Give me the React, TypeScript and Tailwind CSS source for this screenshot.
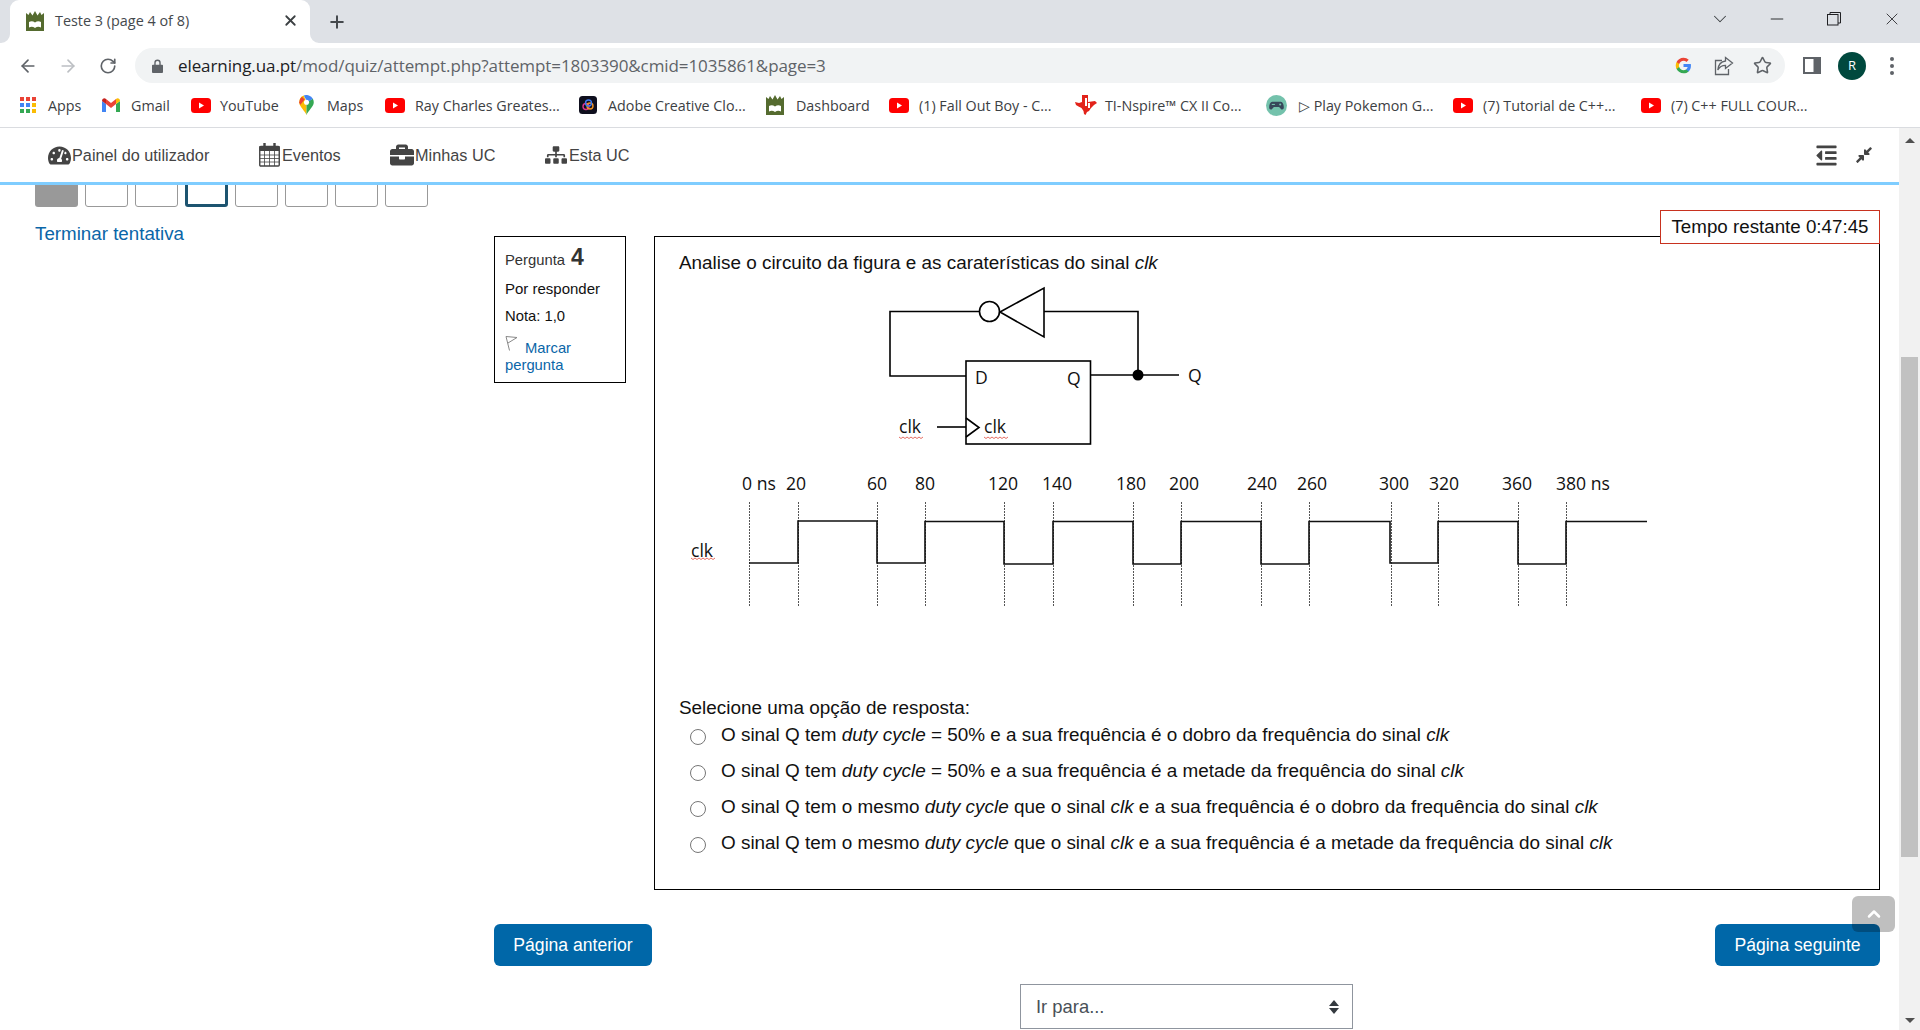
import React from "react";
import { ArrowLeft, ArrowRight, RotateCw, Star, X, Plus, ChevronDown, Minus, ChevronUp } from "lucide-react";
import { FaTachometerAlt, FaBriefcase, FaSitemap, FaOutdent, FaCompressAlt } from "react-icons/fa";

const chromeFont = "font-['Open_Sans','Noto_Sans',sans-serif]";

function Castle({ className }: { className?: string }) {
  return (
    <svg viewBox="0 0 20 20" className={className}>
      <path d="M1 2l2.500 2L5 1l2.500 3.500L10 0l2.500 4.500L15 1l1.500 3L19 2v18H1z" fill="#556b2f" />
      <path d="M4 11c2-1 4-1 6 .6 2-1.600 4-1.600 6-.6v5.500c-2-1-4-1-6 .5-2-1.500-4-1.500-6-.5z" fill="#fff" />
    </svg>
  );
}

function YT() {
  return (
    <svg viewBox="0 0 20 15" className="w-[20px] h-[15px]">
      <rect width="20" height="15" rx="3.500" fill="#f00" />
      <path d="M8 4.500v6l5-3z" fill="#fff" />
    </svg>
  );
}

function AppsIcon() {
  const c = ["#ea4335", "#ea4335", "#ea4335", "#4285f4", "#4285f4", "#fbbc04", "#34a853", "#34a853", "#fbbc04"];
  return (
    <div className="grid grid-cols-3 gap-[2px] w-[16px] h-[16px]">
      {c.map((col, i) => (
        <span key={i} className="block w-[4px] h-[4px]" style={{ background: col }} />
      ))}
    </div>
  );
}

function GmailIcon() {
  return (
    <svg viewBox="0 0 18 14" className="w-[18px] h-[14px]">
      <path d="M0 3v11h4V6z" fill="#4285f4" />
      <path d="M18 3v11h-4V6z" fill="#34a853" />
      <path d="M4 6l5 4 5-4V1L9 5 4 1z" fill="#ea4335" />
      <path d="M0 3c0-2.500 2.500-3.500 4-2v5z" fill="#c5221f" />
      <path d="M18 3c0-2.500-2.500-3.500-4-2v5z" fill="#fbbc04" />
    </svg>
  );
}

function MapsIcon() {
  return (
    <svg viewBox="0 0 16 22" className="w-[15px] h-[20px]">
      <path d="M8 22C6 17 0 13 0 8a8 8 0 0 1 5-7.400L8 8z" fill="#fbbc04" />
      <path d="M8 22c2-5 8-9 8-14 0-1.500-.4-2.800-1-4L8 8z" fill="#34a853" />
      <path d="M5 .6A8 8 0 0 1 15 4l-4 3-3-1z" fill="#4285f4" />
      <path d="M0 8a8 8 0 0 1 3-6l3 3-5 6z" fill="#ea4335" />
      <circle cx="8" cy="8" r="2.800" fill="#fff" />
    </svg>
  );
}

function AdobeIcon() {
  return (
    <svg viewBox="0 0 18 18" className="w-[18px] h-[18px]">
      <rect width="18" height="18" rx="3.500" fill="#0f0f1e" />
      <circle cx="7" cy="10.500" r="3" fill="none" stroke="#e0338f" strokeWidth="1.400" />
      <circle cx="11" cy="10" r="3" fill="none" stroke="#f29423" strokeWidth="1.400" />
      <circle cx="9.500" cy="7" r="3" fill="none" stroke="#3f7bf0" strokeWidth="1.400" />
    </svg>
  );
}

function TiIcon() {
  return (
    <svg viewBox="0 0 22 22" className="w-[22px] h-[22px]">
      <path d="M7 1h6v7l7-1 2 2-3 2-3 3-2 3-2 1-1.500 3-1.500-1-.5-3-2-3-3-1.500L1 11 0 8l4 1 3-1z" fill="#e2231a" />
      <path d="M10 4h2v8h-2zM14 5h2v2h-2zM13 9h2v5h-2z" fill="#fff" />
    </svg>
  );
}

function GameIcon() {
  return (
    <svg viewBox="0 0 20 20" className="w-[21px] h-[21px]">
      <circle cx="10" cy="10" r="10" fill="#74c2ac" />
      <path d="M6 6.500h8c2 0 3 3 3 5.500 0 2-2 2.500-3 1l-1.500-1.500h-5L6 13c-1 1.500-3 1-3-1 0-2.500 1-5.500 3-5.500z" fill="#37475a" />
      <circle cx="13.500" cy="9" r="1" fill="#74c2ac" />
      <rect x="5.500" y="8.500" width="3" height="1" fill="#74c2ac" />
    </svg>
  );
}

function Bookmark({ icon, label, iconSlot, textWidth }: { icon: React.ReactNode; label: string; iconSlot: string; textWidth: string }) {
  return (
    <div className="flex items-center shrink-0">
      <div className={`flex items-center justify-start shrink-0 ${iconSlot}`}>{icon}</div>
      <span className={`whitespace-nowrap text-[14.300px] text-[#3c4043] pt-[1px] ${textWidth}`}>{label}</span>
    </div>
  );
}

function BookmarksBar() {
  return (
    <div className={`h-[45px] border-b border-[#dadce0] bg-white flex items-center pl-[20px] gap-[21px] shrink-0 overflow-hidden ${chromeFont}`}>
      <Bookmark icon={<AppsIcon />} label="Apps" iconSlot="w-[28px]" textWidth="w-[33px]" />
      <Bookmark icon={<GmailIcon />} label="Gmail" iconSlot="w-[29px]" textWidth="w-[39px]" />
      <Bookmark icon={<YT />} label="YouTube" iconSlot="w-[29px]" textWidth="w-[58px]" />
      <Bookmark icon={<MapsIcon />} label="Maps" iconSlot="w-[28px]" textWidth="w-[37px]" />
      <Bookmark icon={<YT />} label="Ray Charles Greates..." iconSlot="w-[30px]" textWidth="w-[143px]" />
      <Bookmark icon={<AdobeIcon />} label="Adobe Creative Clo..." iconSlot="w-[29px]" textWidth="w-[136px]" />
      <Bookmark icon={<Castle className="w-[20px] h-[20px]" />} label="Dashboard" iconSlot="w-[31px]" textWidth="w-[72px]" />
      <Bookmark icon={<YT />} label="(1) Fall Out Boy - C..." iconSlot="w-[30px]" textWidth="w-[135px]" />
      <Bookmark icon={<TiIcon />} label="TI-Nspire™ CX II Co..." iconSlot="w-[30px]" textWidth="w-[140px]" />
      <Bookmark icon={<GameIcon />} label="▷ Play Pokemon G..." iconSlot="w-[33px]" textWidth="w-[133px]" />
      <Bookmark icon={<YT />} label="(7) Tutorial de C++..." iconSlot="w-[30px]" textWidth="w-[137px]" />
      <Bookmark icon={<YT />} label="(7) C++ FULL COUR..." iconSlot="w-[30px]" textWidth="w-[142px]" />
    </div>
  );
}

function TabStrip() {
  return (
    <div className={`h-[43px] bg-[#dee1e6] flex shrink-0 pl-[10px] ${chromeFont}`}>
      <div className="relative w-[300px] h-[43px] bg-white rounded-t-[9px] flex items-center pl-[15px] pr-[11px] pb-[2px]">
        <svg viewBox="0 0 9 9" className="absolute -left-[9px] bottom-0 w-[9px] h-[9px]"><path d="M9 0v9H0a9 9 0 0 0 9-9z" fill="#fff" /></svg>
        <svg viewBox="0 0 9 9" className="absolute -right-[9px] bottom-0 w-[9px] h-[9px]"><path d="M0 0v9h9a9 9 0 0 1-9-9z" fill="#fff" /></svg>
        <Castle className="w-[20px] h-[20px] shrink-0" />
        <span className="ml-[10px] text-[14.400px] text-[#45494d] whitespace-nowrap flex-1">Teste 3 (page 4 of 8)</span>
        <X size={17} strokeWidth={2.500} className="text-[#3c4043]" />
      </div>
      <div className="ml-[17px] h-[43px] flex items-center">
        <Plus size={20} strokeWidth={2.400} className="text-[#45494d]" />
      </div>
      <div className="ml-auto flex items-center h-[37px] pr-[18px]">
        <ChevronDown size={22} strokeWidth={1.100} className="text-[#3c4043] mr-[36px]" />
        <Minus size={20} strokeWidth={1.100} className="text-[#202124] mr-[40px]" />
        <svg viewBox="0 0 14 14" className="w-[14px] h-[14px] mr-[41px]" fill="none" stroke="#202124" strokeWidth="1">
          <rect x="0.500" y="2.500" width="10.500" height="10.500" fill="#dee1e6" />
          <path d="M3 2.500V.5h10.500V11h-2.500" />
        </svg>
        <X size={20} strokeWidth={1} className="text-[#202124]" />
      </div>
    </div>
  );
}

function Toolbar() {
  return (
    <div className={`h-[40px] bg-white flex items-start shrink-0 pt-[5px] pl-[8px] ${chromeFont}`}>
      <div className="w-[40px] h-[35px] flex items-center justify-center"><ArrowLeft size={20} strokeWidth={2} className="text-[#5f6368]" /></div>
      <div className="w-[40px] h-[35px] flex items-center justify-center"><ArrowRight size={20} strokeWidth={2} className="text-[#bcbfc3]" /></div>
      <div className="w-[40px] h-[35px] flex items-center justify-center"><RotateCw size={18} strokeWidth={2.200} className="text-[#5f6368]" /></div>
      <div className="ml-[7px] w-[1650px] h-[35px] rounded-full bg-[#f1f3f4] flex items-center pl-[17px] pr-[13px]">
        <svg viewBox="0 0 12 15" className="w-[11px] h-[14px] shrink-0">
          <path d="M2.500 6V4a3.500 3.500 0 0 1 7 0v2H11a1 1 0 0 1 1 1v7a1 1 0 0 1-1 1H1a1 1 0 0 1-1-1V7a1 1 0 0 1 1-1zM4 6h4V4a2 2 0 0 0-4 0z" fill="#5f6368" />
        </svg>
        <span className="ml-[15px] text-[17px] whitespace-nowrap text-[#5f6368] tracking-[-0.09px]">
          <span className="text-[#202124]">elearning.ua.pt</span>/mod/quiz/attempt.php?attempt=1803390&amp;cmid=1035861&amp;page=3
        </span>
        <div className="ml-auto flex items-center">
          <svg viewBox="0 0 48 48" className="w-[17px] h-[17px] mr-[22px]">
            <path fill="#4285f4" d="M45 24.500c0-1.600-.1-3.100-.4-4.500H24v8.500h11.800c-.5 2.700-2 5-4.400 6.600v5.500h7.100C42.700 36.700 45 31.100 45 24.500z" />
            <path fill="#34a853" d="M24 46c5.900 0 10.900-2 14.500-5.300l-7.100-5.500c-2 1.300-4.500 2.100-7.400 2.100-5.700 0-10.500-3.800-12.200-9H4.500v5.700C8.100 41.100 15.500 46 24 46z" />
            <path fill="#fbbc05" d="M11.800 28.300c-.4-1.300-.7-2.800-.7-4.300s.3-3 .7-4.300V14H4.500C3 17 2 20.400 2 24s1 7 2.500 10z" />
            <path fill="#ea4335" d="M24 10.700c3.200 0 6.100 1.100 8.400 3.300l6.300-6.300C34.900 4.200 29.900 2 24 2 15.500 2 8.100 6.900 4.500 14l7.300 5.700c1.700-5.200 6.500-9 12.200-9z" />
          </svg>
          <svg viewBox="0 0 20 20" className="w-[20px] h-[20px] mr-[19px]" fill="none" stroke="#5f6368" strokeWidth="1.300">
            <path d="M8 4.500H1.500v14h13V13" />
            <path d="M11.500 1.500L18.500 7l-7 5.500V9.300C8 9.300 5.500 10.800 3.800 14c.5-5 3.200-8.500 7.700-9z" />
          </svg>
          <Star size={19} strokeWidth={2} className="text-[#5f6368]" />
        </div>
      </div>
      <div className="ml-[7px] w-[40px] h-[35px] flex items-center justify-center">
        <svg viewBox="0 0 18 17" className="w-[18px] h-[17px]"><rect width="18" height="17" fill="#5f6368" /><rect x="2" y="2" width="8.500" height="13" fill="#fff" /></svg>
      </div>
      <div className="w-[40px] h-[35px] flex items-center justify-center">
        <div className="w-[28px] h-[28px] rounded-full bg-[#00493e] text-white text-[13px] flex items-center justify-center">R</div>
      </div>
      <div className="w-[40px] h-[35px] flex flex-col items-center justify-center gap-[3px]">
        <span className="block w-[4px] h-[4px] rounded-full bg-[#5f6368]" />
        <span className="block w-[4px] h-[4px] rounded-full bg-[#5f6368]" />
        <span className="block w-[4px] h-[4px] rounded-full bg-[#5f6368]" />
      </div>
    </div>
  );
}

function CalendarIcon() {
  return (
    <svg viewBox="0 0 21 24" className="w-[21px] h-[24px]" fill="none" stroke="#444">
      <rect x="0.750" y="3.500" width="19.500" height="19.500" rx="1" strokeWidth="1.400" />
      <rect x="0.500" y="3" width="20" height="5" fill="#444" stroke="none" />
      <path d="M5.500 0v4M15.500 0v4" strokeWidth="2.400" />
      <path d="M1 12h19M1 15.500h19M1 19h19M5.500 8v15M10.500 8v15M15.500 8v15" strokeWidth="0.800" />
    </svg>
  );
}

function NavBar() {
  return (
    <div className="h-[57px] bg-white border-b-[3px] border-[#7fcdff] flex items-center shrink-0 text-[#444] text-[16.250px] pl-[48px] pr-[26px]">
      <div className="flex items-center w-[211px]"><FaTachometerAlt size={23} className="mr-[1px]" /><span className="pt-[1px]">Painel do utilizador</span></div>
      <div className="flex items-center w-[131px]"><CalendarIcon /><span className="ml-[2px] pt-[1px]">Eventos</span></div>
      <div className="flex items-center w-[155px]"><FaBriefcase size={24} /><span className="ml-[1px] pt-[1px]">Minhas UC</span></div>
      <div className="flex items-center"><FaSitemap size={22} /><span className="ml-[2px] pt-[1px]">Esta UC</span></div>
      <div className="ml-auto flex items-center gap-[17px]">
        <FaOutdent size={23} />
        <FaCompressAlt size={18} />
      </div>
    </div>
  );
}

function Squiggle({ x, y, w }: { x: number; y: number; w: number }) {
  let d = `M${x} ${y}`;
  for (let i = 0; i * 2 < w; i++) d += ` l2 ${i % 2 ? -1.500 : 1.500}`;
  return <path d={d} stroke="#e04a3c" strokeWidth="0.800" fill="none" />;
}

const ticks = [749, 798, 877, 925, 1004, 1053, 1133, 1181, 1261, 1309, 1391, 1438, 1518, 1566];
const labels: [string, number][] = [
  ["0 ns", 742], ["20", 786], ["60", 867], ["80", 915], ["120", 988], ["140", 1042], ["180", 1116],
  ["200", 1169], ["240", 1247], ["260", 1297], ["300", 1379], ["320", 1429], ["360", 1502], ["380 ns", 1556],
];

function Figure() {
  const wave = "M749 563H798V521H877V563H925V521.500H1004V564H1053V521.500H1133V564H1181V521.500H1261V564H1309V521.500H1390V563H1438V521.500H1518V564H1566V521.500H1647";
  return (
    <svg viewBox="680 280 980 340" className="block w-[980px] h-[340px] mt-[4px] ml-[1px]">
      <g fill="none" stroke="#000" strokeWidth="1.600">
        <path d="M979 311.500H890V376H966" />
        <circle cx="989.500" cy="311.500" r="10" />
        <path d="M1000 312L1044 288V337Z" />
        <path d="M1044 311.500H1138V375" />
        <rect x="966" y="361" width="124.500" height="83" />
        <path d="M1090 375H1179" />
        <path d="M937 427H966" />
        <path d="M966 418L979 427.500L966 437" />
      </g>
      <circle cx="1138" cy="375" r="5.500" fill="#000" />
      <g fontFamily="'Open Sans','Noto Sans',sans-serif" fontSize="17.600" fill="#111">
        <text x="975" y="384">D</text>
        <text x="1067" y="385">Q</text>
        <text x="1188" y="382">Q</text>
        <text x="899" y="433">clk</text>
        <text x="984" y="433">clk</text>
        <text x="691" y="557">clk</text>
        {labels.map(([t, x]) => (
          <text key={t} x={x} y="489.500">{t}</text>
        ))}
      </g>
      <Squiggle x={899} y={437} w={23} />
      <Squiggle x={984} y={437} w={23} />
      <Squiggle x={691} y={558} w={23} />
      <g stroke="#555" strokeWidth="1" strokeDasharray="2 1">
        {ticks.map((x) => (
          <path key={x} d={`M${x}.500 502V606`} />
        ))}
      </g>
      <path d={wave} fill="none" stroke="#111" strokeWidth="1.600" />
    </svg>
  );
}

const options: React.ReactNode[] = [
  <>O sinal Q tem <i>duty cycle</i> = 50% e a sua frequência é o dobro da frequência do sinal <i>clk</i></>,
  <>O sinal Q tem <i>duty cycle</i> = 50% e a sua frequência é a metade da frequência do sinal <i>clk</i></>,
  <>O sinal Q tem o mesmo <i>duty cycle</i> que o sinal <i>clk</i> e a sua frequência é o dobro da frequência do sinal <i>clk</i></>,
  <>O sinal Q tem o mesmo <i>duty cycle</i> que o sinal <i>clk</i> e a sua frequência é a metade da frequência do sinal <i>clk</i></>,
];

function QuizNav() {
  return (
    <div className="w-[494px] shrink-0 pl-[35px] -mt-[8px]">
      <div className="flex gap-[7px]">
        <div className="w-[43px] h-[30px] rounded-[3px] bg-[#999]" />
        <div className="w-[43px] h-[30px] rounded-[3px] border border-[#999]" />
        <div className="w-[43px] h-[30px] rounded-[3px] border border-[#999]" />
        <div className="w-[43px] h-[30px] rounded-[3px] border-[3px] border-[#1d5470]" />
        <div className="w-[43px] h-[30px] rounded-[3px] border border-[#999]" />
        <div className="w-[43px] h-[30px] rounded-[3px] border border-[#999]" />
        <div className="w-[43px] h-[30px] rounded-[3px] border border-[#999]" />
        <div className="w-[43px] h-[30px] rounded-[3px] border border-[#999]" />
      </div>
      <div className="mt-[13px] text-[18.750px] leading-[28px] text-[#0a66a8]">Terminar tentativa</div>
    </div>
  );
}

function FlagIcon() {
  return (
    <svg viewBox="0 0 13 15" className="inline-block w-[13px] h-[15px] align-[2px] mr-[7px]" fill="none" stroke="#888" strokeWidth="1">
      <path d="M1 .5L4.500 14.500" />
      <path d="M1 .5L12 1.500L3 7" />
    </svg>
  );
}

function InfoBox() {
  return (
    <div className="w-[132px] h-[147px] shrink-0 border border-black px-[10px] pt-[8px] text-[#111] text-[14.800px]">
      <div className="flex items-baseline h-[24px] text-[#333]">
        <span>Pergunta</span>
        <b className="ml-[6px] text-[23px] leading-[24px]">4</b>
      </div>
      <div className="mt-[10px] leading-[20px] text-[15px]">Por responder</div>
      <div className="mt-[7px] leading-[20px]">Nota: 1,0</div>
      <div className="mt-[10px] leading-[17px] text-[#0a66a8]">
        <FlagIcon />Marcar pergunta
      </div>
    </div>
  );
}

function Question() {
  return (
    <div className="relative w-[1226px] h-[654px] shrink-0 border border-black pl-[24px] pt-[13px] text-[#111] text-[18.900px]">
      <div className="absolute -top-[27px] -right-[1px] h-[34px] w-[220px] bg-white border border-[#c8321f] flex items-center justify-center whitespace-nowrap text-[18.750px]">
        Tempo restante 0:47:45
      </div>
      <div className="leading-[26px]">Analise o circuito da figura e as caraterísticas do sinal <i>clk</i></div>
      <Figure />
      <div className="mt-[74px] leading-[28px]">Selecione uma opção de resposta:</div>
      <div className="flex flex-col -mt-[5px]">
        {options.map((o, i) => (
          <div key={i} className="h-[36px] flex items-center pl-[11px]">
            <input type="radio" name="q" className="w-[16px] h-[16px] m-0 shrink-0 translate-y-[2px] accent-[#666]" />
            <span className="ml-[15px] whitespace-nowrap">{o}</span>
          </div>
        ))}
      </div>
    </div>
  );
}

function Scrollbar() {
  return (
    <div className="w-[21px] bg-[#f1f1f1] shrink-0 flex flex-col items-center">
      <div className="h-[20px] w-full flex items-center justify-center pt-[4px]">
        <div className="w-0 h-0 border-x-[5px] border-x-transparent border-b-[5px] border-b-[#505050]" />
      </div>
      <div className="mt-[209px] w-[17px] h-[500px] bg-[#c1c1c1]" />
      <div className="mt-auto h-[20px] w-full flex items-center justify-center">
        <div className="w-0 h-0 border-x-[5px] border-x-transparent border-t-[5px] border-t-[#505050]" />
      </div>
    </div>
  );
}

export default function App() {
  return (
    <div className="relative w-[1920px] h-[1030px] overflow-hidden bg-white flex flex-col font-['Liberation_Sans',Arial,sans-serif]">
      <TabStrip />
      <Toolbar />
      <BookmarksBar />
      <div className="flex flex-1 min-h-0">
        <div className="flex-1 min-w-0 flex flex-col">
          <NavBar />
          <div className="flex-1 min-h-0 overflow-hidden bg-white">
            <div className="flex items-start">
              <QuizNav />
              <div className="pt-[51px] flex flex-col">
                <div className="flex gap-[28px]">
                  <InfoBox />
                  <Question />
                </div>
                <div className="mt-[34px] flex justify-between text-white text-[17.600px]">
                  <div className="w-[158px] h-[42px] rounded-[6px] bg-[#0067a8] flex items-center justify-center">Página anterior</div>
                  <div className="w-[165px] h-[42px] rounded-[6px] bg-[#0067a8] flex items-center justify-center">Página seguinte</div>
                </div>
                <div className="mt-[18px] ml-[526px] w-[333px] h-[45px] border border-[#8f959e] flex items-center pl-[15px] pr-[13px] text-[#495057] text-[18.400px]">
                  <span>Ir para...</span>
                  <div className="ml-auto flex flex-col gap-[2px]">
                    <div className="w-0 h-0 border-x-[5px] border-x-transparent border-b-[6px] border-b-[#343a40]" />
                    <div className="w-0 h-0 border-x-[5px] border-x-transparent border-t-[6px] border-t-[#343a40]" />
                  </div>
                </div>
              </div>
            </div>
          </div>
        </div>
        <Scrollbar />
      </div>
      <div className="absolute left-[1852px] top-[896px] w-[43px] h-[36px] rounded-[6px] bg-black/25 flex items-center justify-center">
        <ChevronUp size={20} strokeWidth={3} className="text-white" />
      </div>
    </div>
  );
}
